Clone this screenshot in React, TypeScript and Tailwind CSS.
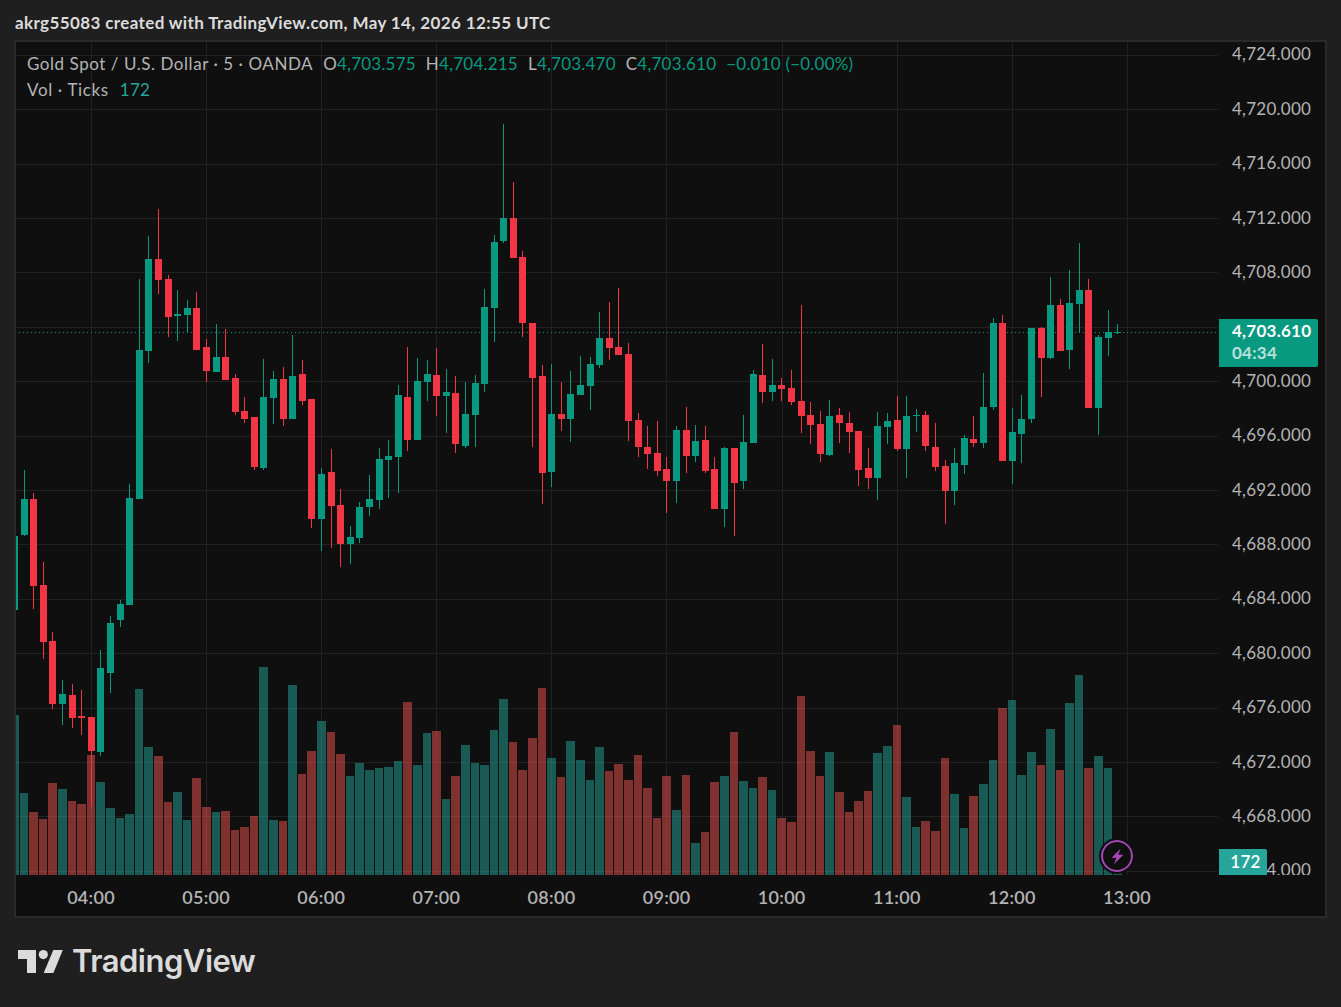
const GREEN = "#089981";
const RED = "#f23645";

// [up, wick top, body top, body bottom, wick bottom], all in page pixels
const candles: number[][] = [
  [1,536,536,610,610],[1,470,499,535,536],[0,493,499,586,609],[0,562,585,642,659],[0,632,641,704,709],
  [1,680,694,704,725],[0,684,695,718,728],[0,690,716,718,735],[0,717,717,751,807],[1,650,668,752,756],
  [1,616,623,673,693],[1,600,604,620,627],[1,484,498,605,605],[1,279,350,499,499],[1,236,259,351,363],
  [0,209,259,280,294],[0,275,279,317,337],[1,290,314,316,341],[1,300,308,315,333],[0,292,308,350,350],
  [0,339,347,371,382],[1,324,357,372,372],[0,329,357,380,380],[0,374,378,412,415],[0,397,411,419,423],
  [0,417,417,467,470],[1,359,397,468,470],[1,371,379,398,424],[0,367,379,419,426],[1,335,376,419,419],
  [0,360,374,401,405],[0,399,399,519,528],[1,468,474,519,551],[0,449,472,506,548],[0,489,505,544,567],
  [1,526,537,544,564],[1,502,507,538,543],[1,475,499,507,516],[1,448,459,500,509],[1,440,456,460,498],
  [1,385,395,457,493],[0,347,397,440,451],[1,358,381,440,440],[1,360,374,382,401],[0,348,375,396,416],
  [1,369,392,396,433],[0,376,393,444,453],[1,382,414,446,448],[1,375,383,415,447],[1,289,307,384,392],
  [1,235,242,308,342],[1,124,218,241,243],[0,182,218,258,258],[0,251,257,323,337],[0,323,323,378,447],
  [0,365,376,473,504],[1,364,414,472,487],[0,382,414,419,431],[1,371,394,419,442],[1,356,385,395,395],
  [1,357,364,386,410],[1,312,338,365,368],[0,302,338,348,360],[0,288,347,355,355],[0,343,354,421,441],
  [0,413,420,447,457],[0,426,447,454,469],[0,421,453,471,476],[0,457,469,481,513],[1,426,430,481,503],
  [0,407,430,456,473],[1,425,441,456,462],[0,426,440,471,473],[0,457,469,509,509],[1,447,448,509,527],
  [0,448,448,483,536],[1,415,442,481,489],[1,370,374,443,443],[0,344,375,392,403],[1,359,385,392,401],
  [0,378,385,389,401],[0,370,388,402,405],[0,305,401,416,433],[0,402,415,425,444],[0,411,424,454,462],
  [1,400,416,455,456],[0,408,415,423,443],[0,412,423,432,453],[0,431,431,470,486],[0,448,468,478,489],
  [1,412,426,478,500],[1,413,421,427,444],[0,396,420,449,451],[1,396,416,449,478],[1,409,415,416,432],
  [0,411,415,446,451],[0,423,447,467,471],[0,460,466,491,524],[1,448,463,491,505],[1,435,438,465,474],
  [0,416,439,443,447],[1,373,407,443,448],[1,318,323,407,410],[0,315,323,461,461],[1,408,432,461,484],
  [1,395,419,434,463],[1,328,328,419,423],[0,327,328,358,397],[1,277,305,358,359],[0,299,305,351,351],
  [1,270,303,350,369],[1,243,290,304,333],[0,279,290,408,408],[1,335,337,408,435],[1,310,332,338,356],
  [1,324,332,333,334],
];

// top of each volume bar, the bars stand on y = 875
const volumes = [
  715,793,812,819,783,789,801,804,755,782,808,818,814,689,747,756,802,792,820,778,807,812,811,830,827,816,667,820,821,685,
  774,751,721,732,754,776,763,770,768,767,761,702,765,733,731,799,776,745,763,765,730,699,742,770,738,688,758,777,741,760,
  780,747,771,764,780,755,788,818,776,810,775,843,832,782,776,732,781,788,777,790,818,822,696,751,776,752,792,812,801,791,
  753,746,725,797,827,821,831,758,794,828,796,784,760,708,700,775,752,765,729,770,703,675,768,756,768,872,
];

const gridY = [55,109,164,218,272,327,381,436,490,544,599,653,708,762,816,871];
const gridX = [91,206,321,436,551,666,782,897,1012,1127];
// 4,704.000 sits behind the last price tag, so its row stays empty
const prices = ["4,724.000","4,720.000","4,716.000","4,712.000","4,708.000","","4,700.000","4,696.000","4,692.000","4,688.000","4,684.000","4,680.000","4,676.000","4,672.000","4,668.000","4,664.000"];
const hours = ["04:00","05:00","06:00","07:00","08:00","09:00","10:00","11:00","12:00","13:00"];
const priceDots = Array.from({ length: 300 }, (_, i) => 19 + i * 4);

const barX = (i: number) => Math.floor(91.3 + 9.593 * (i - 8));

function Chart() {
  return (
    <svg viewBox="16 42 1202 833" className="block h-[833px] w-[1202px]" shapeRendering="crispEdges">
      {gridY.map((y) => (
        <rect key={y} x={16} y={y} width={1202} height={1} fill="#212121" />
      ))}
      {gridX.map((x) => (
        <rect key={x} x={x} y={42} width={1} height={833} fill="#212121" />
      ))}
      {volumes.map((top, i) => (
        <rect
          key={i}
          x={barX(i) - 4}
          y={top}
          width={barX(i + 1) - barX(i) - 1}
          height={875 - top}
          fill={candles[i][0] ? "#26a69a" : "#ef5350"}
          opacity={0.5}
        />
      ))}
      {priceDots.map((x) => (
        <rect key={x} x={x} y={332} width={1} height={1} fill={GREEN} />
      ))}
      {candles.map(([up, wickTop, bodyTop, bodyBottom, wickBottom], i) => (
        <g key={i} fill={up ? GREEN : RED}>
          <rect x={barX(i)} y={wickTop} width={1} height={wickBottom - wickTop} />
          <rect x={barX(i) - 3} y={bodyTop} width={7} height={bodyBottom - bodyTop} />
        </g>
      ))}
    </svg>
  );
}

function Ohlc({ label, value }: { label: string; value: string }) {
  return (
    <span>
      {label}
      <span className="text-[#089981]">{value}</span>
    </span>
  );
}

export default function App() {
  return (
    <div className="flex h-[1007px] w-full flex-col overflow-hidden bg-[#1f1f1f] font-[Lato,sans-serif]">
      <div className="flex h-[40px] items-center pl-[15px] pt-[5px] text-[17px] font-bold tracking-[0.38px] text-[#dbdbdb]">
        akrg55083 created with TradingView.com, May 14, 2026 12:55 UTC
      </div>

      <div className="ml-[14px] flex h-[878px] w-[1313px] flex-col border-2 border-[#2a2a2a] bg-[#0f0f0f]">
        <div className="flex h-[833px]">
          <div className="relative w-[1202px]">
            <Chart />

            <div className="absolute left-[11px] top-[9px] text-[17px] leading-[26px] tracking-[0.22px] text-[#b4b4b4]">
              <div className="flex gap-[10px] whitespace-nowrap">
                <span className="tracking-[0.55px]">Gold Spot / U.S. Dollar · 5 · OANDA</span>
                <Ohlc label="O" value="4,703.575" />
                <Ohlc label="H" value="4,704.215" />
                <Ohlc label="L" value="4,703.470" />
                <Ohlc label="C" value="4,703.610" />
                <span className="text-[#089981]">−0.010 (−0.00%)</span>
              </div>
              <div className="flex gap-[11px]">
                <span className="tracking-[0.65px]">Vol · Ticks</span>
                <span className="text-[#26a69a]">172</span>
              </div>
            </div>

            <div className="absolute left-[1085px] top-[798px] flex h-[32px] w-[32px] items-center justify-center rounded-full border-2 border-[#ab47bc] bg-[#0f0f0f] outline-2 outline-[#0f0f0f]">
              <svg viewBox="0 0 16 16" className="h-[19px] w-[19px]">
                <path d="M10.5 1.5 3 9h4.2L5 14.5 13 6.6H8.6l1.9-5.1Z" fill="#ab47bc" />
              </svg>
            </div>
          </div>

          <div className="relative w-[107px] overflow-hidden text-[17px] tracking-[0.25px] text-[#b4b4b4]">
            <div className="-mt-[15px]">
              {prices.map((p, i) => (
                <div key={i} className="flex h-[54.4px] items-center pl-[14px]">
                  {p}
                </div>
              ))}
            </div>

            <div className="absolute left-[1px] top-[277px] flex h-[48px] w-[99px] flex-col rounded-r-[2px] bg-[#089981] pl-[13px] leading-[22px] text-white">
              <span className="mt-[1px] font-bold">4,703.610</span>
              <span className="font-bold opacity-70">04:34</span>
            </div>

            <div className="absolute left-[1px] top-[807px] flex h-[26px] w-[48px] items-center justify-center rounded-tr-[2px] bg-[#26a69a] pl-[5px] font-semibold text-white">
              172
            </div>
          </div>
        </div>

        <div className="grid h-[41px] grid-cols-[repeat(10,115.11px)] items-center pl-[17.5px] pt-[3px] text-[18px] font-semibold tracking-[0.3px] text-[#b4b4b4]">
          {hours.map((h) => (
            <span key={h} className="text-center">
              {h}
            </span>
          ))}
        </div>
      </div>

      <div className="flex items-center pl-[18px] pt-[28px]">
        <svg viewBox="0 0 45 23" className="h-[23px] w-[45px]" shapeRendering="geometricPrecision">
          <path d="M0 0h18v23H9V9H0V0Z" fill="#dbdbdb" />
          <circle cx="25.3" cy="4.6" r="4.6" fill="#dbdbdb" />
          <path d="M35.3 0h9.5l-9.4 23h-9.7l9.6-23Z" fill="#dbdbdb" />
        </svg>
        <span className="ml-[9px] font-[Inter,sans-serif] text-[31px] font-semibold leading-[30px] tracking-[-0.5px] text-[#dbdbdb]">
          TradingView
        </span>
      </div>
    </div>
  );
}
